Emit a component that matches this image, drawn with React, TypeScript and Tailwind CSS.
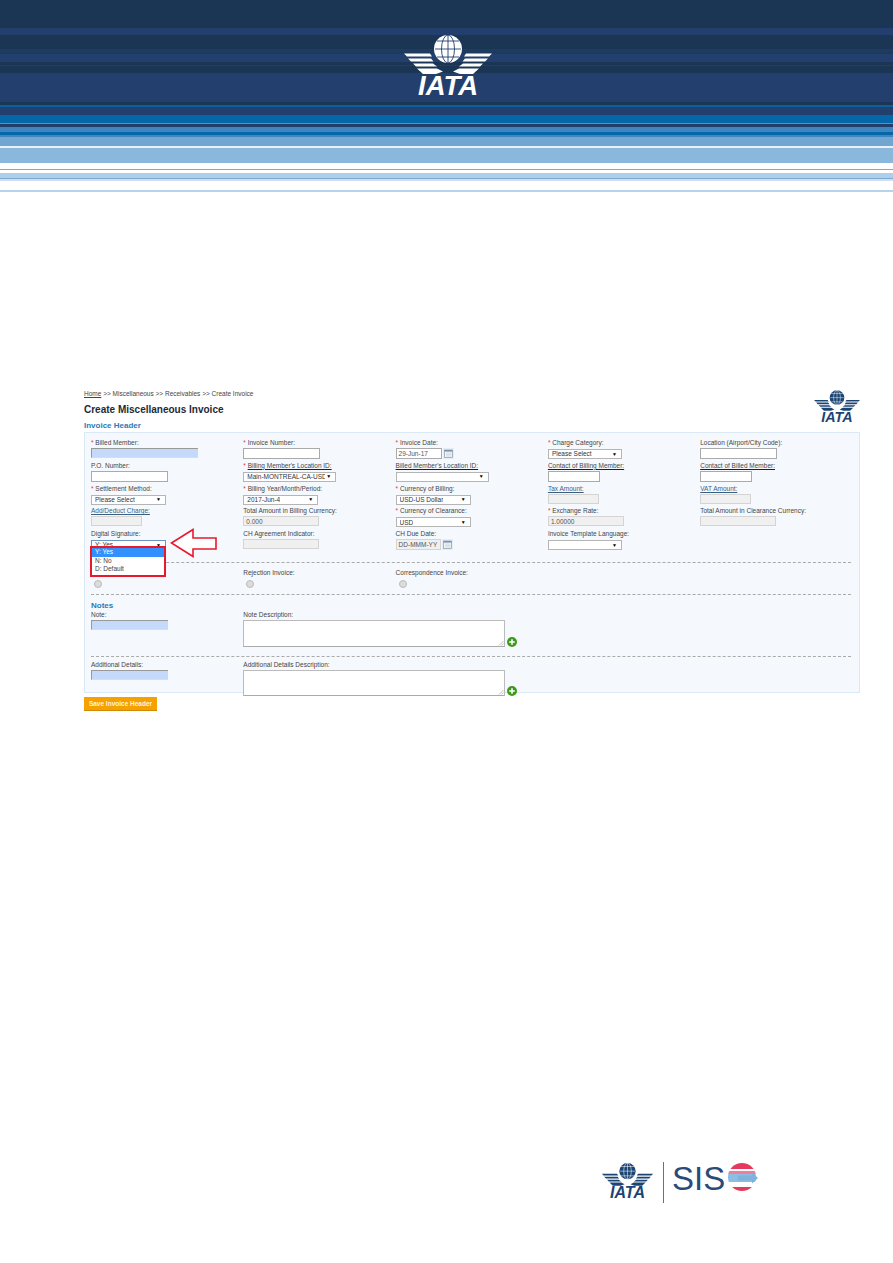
import type { ReactNode } from "react";

const stripes: [number, string][] = [
  [28, "bg-[#1a3654]"],
  [7, "bg-[#233f6d]"],
  [14, "bg-[#1a3654]"],
  [3, "bg-[#1f3b62]"],
  [2, "bg-[#1c3a5c]"],
  [8, "bg-[#233f6d]"],
  [3, "bg-[#1a3654]"],
  [1, "bg-[#20405f]"],
  [7, "bg-[#1a3654]"],
  [29, "bg-[#233f6d]"],
  [3, "bg-[#1a3654]"],
  [2, "bg-[#0b5f9c]"],
  [8, "bg-[#233f6d]"],
  [8, "bg-[#0567a8]"],
  [1, "bg-[#4c93c8]"],
  [3, "bg-[#1f3f6a]"],
  [5, "bg-[#3f86c0]"],
  [3, "bg-[#0567a8]"],
  [2, "bg-[#3f86c0]"],
  [9, "bg-[#72a5d0]"],
  [2, "bg-[#e8f0f8]"],
  [15, "bg-[#8ab8dd]"],
  [6, "bg-white"],
  [1, "bg-[#7fa8d0]"],
  [3, "bg-white"],
  [5, "bg-[#aecfeb]"],
  [1, "bg-[#7fa8d0]"],
  [2, "bg-[#cfe0f2]"],
  [9, "bg-white"],
  [2, "bg-[#b5d3ec]"],
];

function IataLogo({ fg, bg, className }: { fg: string; bg: string; className: string }) {
  const wing = "M0 18.5H26L28 21.5H3ZM4 23.5H27L29.5 26.5H7ZM9 28.5H29L33 31.5H12ZM13 33.5H33L39 36.5L32 39H19Z";
  return (
    <svg viewBox="0 0 88 60" className={className}>
      <path d={wing} fill={fg} />
      <path d={wing} fill={fg} transform="matrix(-1 0 0 1 88 0)" />
      <circle cx="44" cy="14" r="14" fill={fg} />
      <g fill="none" stroke={bg} strokeWidth="0.9">
        <ellipse cx="44" cy="14" rx="6.5" ry="14" />
        <path d="M44 0V28M31 14H57M33 6H55M33 22H55" />
      </g>
      <text
        x="44"
        y="60"
        textAnchor="middle"
        textLength="60"
        lengthAdjust="spacingAndGlyphs"
        fill={fg}
        fontSize="28"
        fontWeight="700"
        fontStyle="italic"
        fontFamily="'Liberation Sans', sans-serif"
      >
        IATA
      </text>
    </svg>
  );
}

function Label({ children, req, link, blue }: { children: ReactNode; req?: boolean; link?: boolean; blue?: boolean }) {
  return (
    <div className="h-[8px] text-[6.5px] leading-[8px] whitespace-nowrap text-[#444]">
      {req && <span className="text-[#e33]">* </span>}
      <span className={link ? (blue ? "underline text-[#3a5f80]" : "underline decoration-[#123] text-[#444]") : ""}>{children}</span>
    </div>
  );
}

function TextBox({ w, value, disabled, h = "h-[11px]" }: { w: string; value?: string; disabled?: boolean; h?: string }) {
  return (
    <div
      className={`${w} ${h} mt-[1px] border text-[6.5px] leading-[9px] pl-[2px] text-[#555] ${
        disabled ? "border-[#d4d4d4] bg-[#f0f0f0]" : "border-[#aaa] bg-white"
      }`}
    >
      {value}
    </div>
  );
}

function Select({ w, value, focus }: { w: string; value?: string; focus?: boolean }) {
  return (
    <div
      className={`${w} h-[10px] mt-[2px] flex items-center justify-between bg-white border pl-[3px] pr-[4px] text-[6.5px] text-[#333] ${
        focus ? "border-[#6c93c4]" : "border-[#b5b5b5]"
      }`}
    >
      <span className="overflow-hidden whitespace-nowrap">{value}</span>
      <span className="text-[5px] leading-none text-black ml-[1px]">▼</span>
    </div>
  );
}

function BlueBox({ w }: { w: string }) {
  return <div className={`${w} h-[10px] mt-[1px] bg-[#c5dafb] border-t border-l border-[#999] border-r-[#ddd] border-b border-b-[#ddd]`} />;
}

function Calendar() {
  return (
    <svg viewBox="0 0 11 11" className="w-[11px] h-[11px] ml-[1px] mt-[1px] bg-[#e4eef8]">
      <rect x="1.5" y="2" width="8" height="7.5" fill="#f4f6f8" stroke="#8a9aa8" strokeWidth="0.7" />
      <rect x="1.5" y="2" width="8" height="1.6" fill="#7d93a8" />
      <path d="M3 5H8.5M3 6.5H8.5M3 8H8.5" stroke="#b4c0cc" strokeWidth="0.5" />
    </svg>
  );
}

function Plus() {
  return (
    <svg viewBox="0 0 10 10" className="w-[10px] h-[10px] ml-[2px] self-end">
      <circle cx="5" cy="5" r="5" fill="#3d9a1c" />
      <path d="M5 2.2V7.8M2.2 5H7.8" stroke="#fff" strokeWidth="1.6" />
    </svg>
  );
}

function Radio() {
  return <div className="w-[8px] h-[8px] ml-[3px] mt-[3px] rounded-full bg-[#dcdcdc] border border-[#bbb]" />;
}

function NoteArea({ h }: { h: string }) {
  return (
    <div className="flex mt-[1px]">
      <div className={`relative w-[262px] ${h} bg-white border border-[#bbb] border-b-[#aaa]`}>
        <svg viewBox="0 0 6 6" className="absolute right-0 bottom-0 w-[6px] h-[6px]">
          <path d="M1 5.5L5.5 1M3.5 5.5L5.5 3.5" stroke="#999" strokeWidth="0.6" />
        </svg>
      </div>
      <Plus />
    </div>
  );
}

function Dashed() {
  return <div className="border-t border-dashed border-[#aaa]" />;
}

function SisBall() {
  return (
    <svg viewBox="0 0 30 30" className="w-[30px] h-[30px] mb-[3px] ml-[3px]">
      <defs>
        <clipPath id="ball">
          <circle cx="14" cy="15" r="14" />
        </clipPath>
      </defs>
      <g clipPath="url(#ball)">
        <rect x="0" y="0" width="28" height="7" fill="#e6395f" />
        <rect x="0" y="9" width="28" height="3" fill="#ef7f98" />
        <rect x="0" y="12" width="28" height="8" fill="#8cbde3" />
        <rect x="0" y="25" width="28" height="5" fill="#e6395f" />
      </g>
      <path d="M10 13.5H24V10.5L30 16L24 21.5V18.5H10Z" fill="#7fb2dc" />
    </svg>
  );
}

export default function App() {
  return (
    <div className="relative min-h-[1263px] bg-white font-['Liberation_Sans',Arial,sans-serif]">
      {/* Header stripes */}
      <header className="relative">
        {stripes.map(([h, c], i) => (
          <div key={i} className={c} style={{ height: h }} />
        ))}
        <IataLogo fg="#ffffff" bg="#233f6d" className="absolute left-[404px] top-[35px] w-[88px] h-[60px]" />
      </header>

      {/* Screen capture of invoice form */}
      <main className="ml-[84px] w-[776px] mt-[198px]">
        <div className="flex justify-between h-[42px]">
          <div>
            <div className="text-[6.5px] leading-[8px] text-[#444]">
              <span className="underline">Home</span> &gt;&gt; Miscellaneous &gt;&gt; Receivables &gt;&gt; Create Invoice
            </div>
            <div className="mt-[6px] text-[10px] leading-[12px] font-bold text-[#1c2a36]">Create Miscellaneous Invoice</div>
            <div className="mt-[5px] text-[8px] leading-[10px] font-bold text-[#2b7ab5]">Invoice Header</div>
          </div>
          <IataLogo fg="#1c4473" bg="#ffffff" className="w-[46px] h-[32px]" />
        </div>

        <section className="border border-[#dbe8f5] bg-[#f5f9fd] h-[261px] pt-[6px] pl-[6px] pr-[8px]">
          <div className="grid grid-cols-[152.3px_152.3px_152.3px_152.3px_1fr] auto-rows-[22.8px]">
            <div><Label req>Billed Member:</Label><BlueBox w="w-[107px]" /></div>
            <div><Label req>Invoice Number:</Label><TextBox w="w-[77px]" /></div>
            <div>
              <Label req>Invoice Date:</Label>
              <div className="flex"><TextBox w="w-[46px]" value="29-Jun-17" /><Calendar /></div>
            </div>
            <div><Label req>Charge Category:</Label><Select w="w-[74px]" value="Please Select" /></div>
            <div><Label>Location (Airport/City Code):</Label><TextBox w="w-[77px]" /></div>

            <div><Label>P.O. Number:</Label><TextBox w="w-[77px]" /></div>
            <div><Label req link>Billing Member's Location ID:</Label><Select w="w-[93px]" value="Main-MONTREAL-CA-USD" /></div>
            <div><Label link>Billed Member's Location ID:</Label><Select w="w-[93px]" /></div>
            <div><Label link>Contact of Billing Member:</Label><TextBox w="w-[52px]" /></div>
            <div><Label link>Contact of Billed Member:</Label><TextBox w="w-[52px]" /></div>

            <div><Label req>Settlement Method:</Label><Select w="w-[75px]" value="Please Select" /></div>
            <div><Label req>Billing Year/Month/Period:</Label><Select w="w-[75px]" value="2017-Jun-4" /></div>
            <div><Label req>Currency of Billing:</Label><Select w="w-[75px]" value="USD-US Dollar" /></div>
            <div><Label link blue>Tax Amount:</Label><TextBox w="w-[51px]" disabled h="h-[10px]" /></div>
            <div><Label link blue>VAT Amount:</Label><TextBox w="w-[51px]" disabled h="h-[10px]" /></div>

            <div><Label link blue>Add/Deduct Charge:</Label><TextBox w="w-[51px]" disabled h="h-[10px]" /></div>
            <div><Label>Total Amount in Billing Currency:</Label><TextBox w="w-[76px]" disabled h="h-[10px]" value="0.000" /></div>
            <div><Label req>Currency of Clearance:</Label><Select w="w-[75px]" value="USD" /></div>
            <div><Label req>Exchange Rate:</Label><TextBox w="w-[76px]" disabled h="h-[10px]" value="1.00000" /></div>
            <div><Label>Total Amount in Clearance Currency:</Label><TextBox w="w-[76px]" disabled h="h-[10px]" /></div>

            <div className="relative">
              <Label>Digital Signature:</Label>
              <Select w="w-[75px]" value="Y: Yes" focus />
              {/* open dropdown with red highlight */}
              <div className="absolute left-[-1px] top-[16px] z-10 w-[76px] h-[31px] border-2 border-[#e8192c] bg-white text-[6.5px] leading-[8px] text-[#444]">
                <div className="h-[9px] bg-[#3390ff] text-white pl-[3px]">Y: Yes</div>
                <div className="pl-[3px]">N: No</div>
                <div className="pl-[3px]">D: Default</div>
              </div>
            </div>
            <div><Label>CH Agreement Indicator:</Label><TextBox w="w-[76px]" disabled h="h-[10px]" /></div>
            <div>
              <Label>CH Due Date:</Label>
              <div className="flex"><TextBox w="w-[45px]" disabled value="DD-MMM-YY" /><Calendar /></div>
            </div>
            <div><Label>Invoice Template Language:</Label><Select w="w-[74px]" /></div>
            <div />
          </div>

          <div className="mt-[9px]"><Dashed /></div>

          <div className="grid grid-cols-[152.3px_152.3px_1fr] h-[31px] pt-[6px]">
            <div className="pt-[8px]"><Radio /></div>
            <div><Label>Rejection Invoice:</Label><Radio /></div>
            <div><Label>Correspondence Invoice:</Label><Radio /></div>
          </div>

          <Dashed />

          <div className="mt-[6px] text-[8px] leading-[10px] font-bold text-[#2b7ab5]">Notes</div>
          <div className="grid grid-cols-[152.3px_1fr] h-[45px]">
            <div><Label>Note:</Label><BlueBox w="w-[77px]" /></div>
            <div><Label>Note Description:</Label><NoteArea h="h-[27px]" /></div>
          </div>

          <Dashed />

          <div className="mt-[4px] grid grid-cols-[152.3px_1fr]">
            <div><Label>Additional Details:</Label><BlueBox w="w-[77px]" /></div>
            <div><Label>Additional Details Description:</Label><NoteArea h="h-[26px]" /></div>
          </div>
        </section>

        <button className="block mt-[4px] w-[73px] h-[14px] bg-[#f5a100] border-b border-[#d08a00] text-center text-[6.5px] font-bold text-[#fff4dc]">
          Save Invoice Header
        </button>
      </main>

      {/* Arrow callout */}
      <svg viewBox="0 0 50 30" className="absolute left-[169px] top-[528px] w-[50px] h-[30px]">
        <path d="M2.5 15L24 1.5V10H47V21H24V28.5Z" fill="#fff" stroke="#e8192c" strokeWidth="1.6" />
      </svg>

      {/* Footer logos */}
      <footer className="flex items-end ml-[600px] mt-[451px]">
        <IataLogo fg="#1c4473" bg="#ffffff" className="w-[55px] h-[35px] mb-[5px]" />
        <div className="w-px h-[41px] bg-[#4a78a8] mx-[8px]" />
        <div className="flex items-center h-[41px] pb-[8px]">
          <span className="text-[33px] leading-none text-[#2a4a78]">SIS</span>
          <SisBall />
        </div>
      </footer>
    </div>
  );
}
